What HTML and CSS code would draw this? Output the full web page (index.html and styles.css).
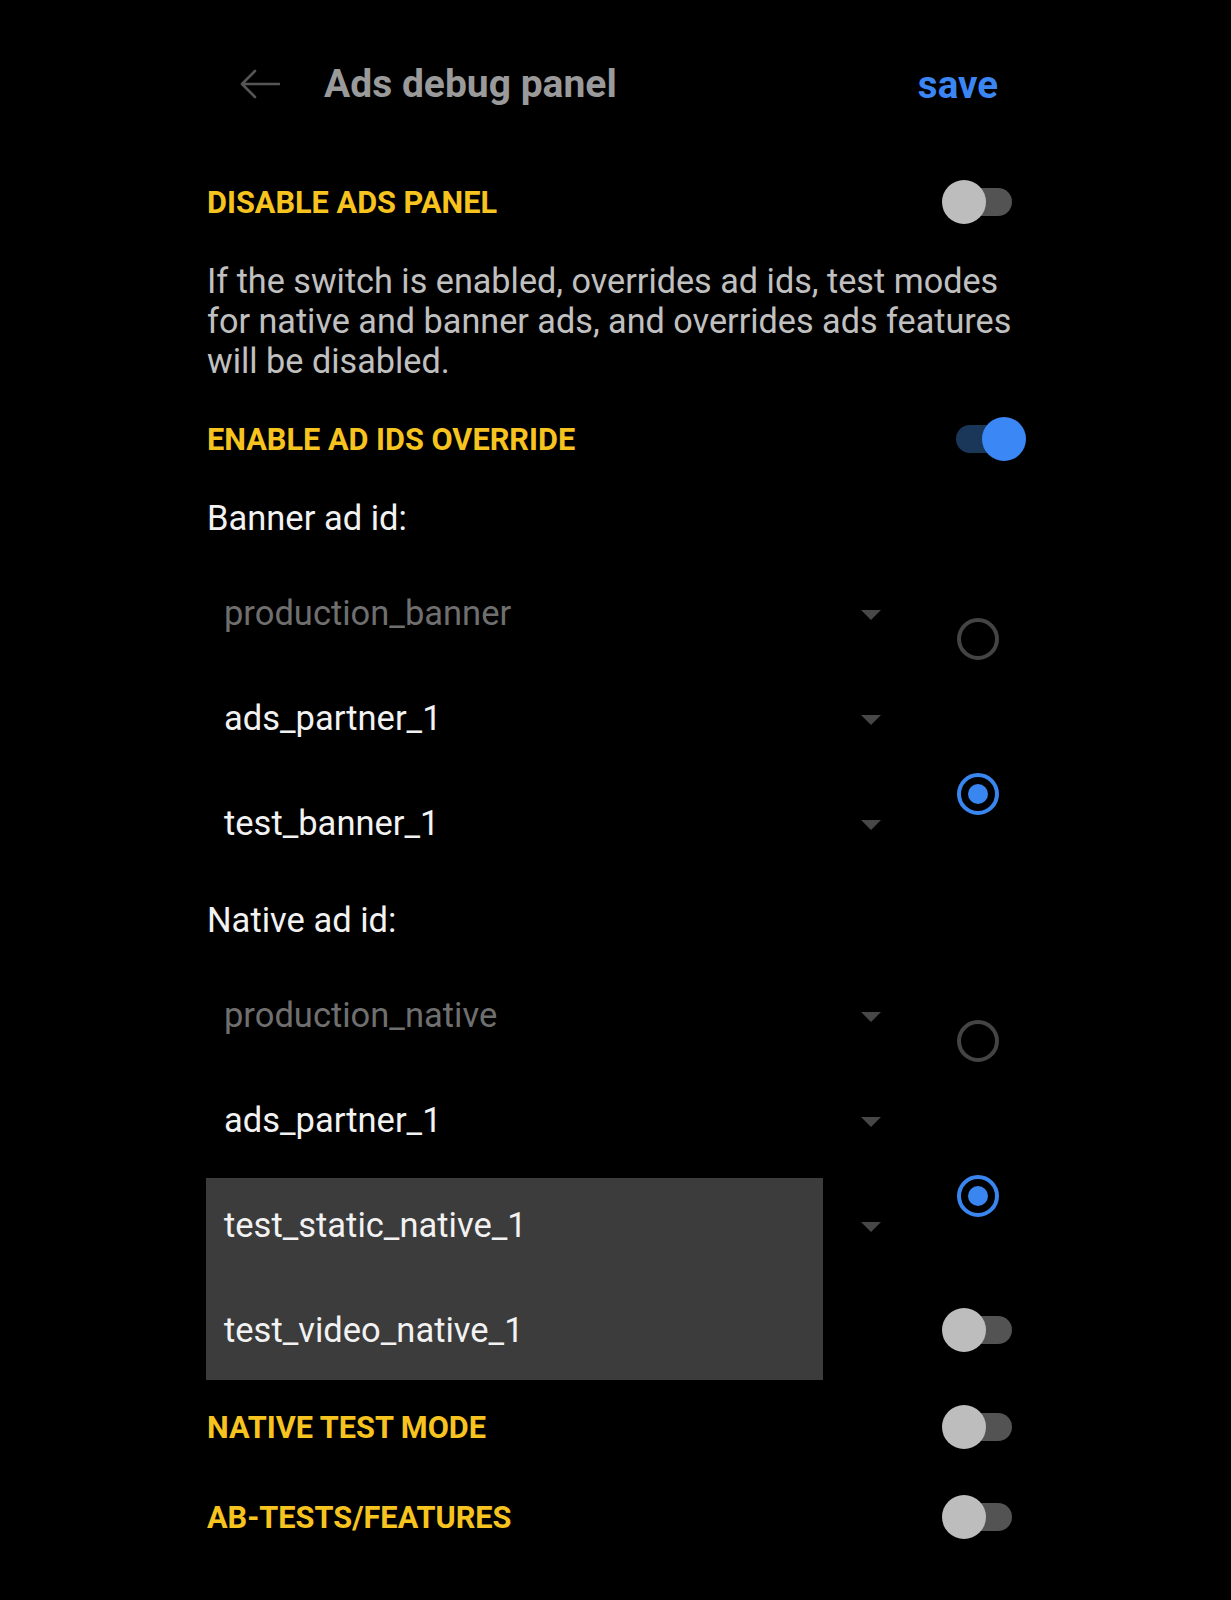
FILE: index.html
```html
<!DOCTYPE html>
<html lang="en">
<head>
    <meta charset="UTF-8">
    <meta name="viewport" content="width=device-width, initial-scale=1.0">
    <title>Ads debug panel</title>
    <link rel="stylesheet" href="styles.css">
</head>
<body>
    <div class="screen">
        <header class="topbar">
            <span class="back">
                <svg width="40" height="30" viewBox="0 0 40 30">
                    <path d="M39 15 H3 M15 2 L2 15 L15 28" fill="none" stroke="#555" stroke-width="2.6" stroke-linecap="round" stroke-linejoin="round"/>
                </svg>
            </span>
            <h1 class="title">Ads debug panel</h1>
            <span class="save">save</span>
        </header>

        <div class="switch-row row-disable">
            <span class="section-title">DISABLE ADS PANEL</span>
            <span class="switch"><span class="track"></span><span class="knob"></span></span>
        </div>

        <p class="hint">If the switch is enabled, overrides ad ids, test modes for native and banner ads, and overrides ads features will be disabled.</p>

        <div class="switch-row row-override">
            <span class="section-title">ENABLE AD IDS OVERRIDE</span>
            <span class="switch on"><span class="track"></span><span class="knob"></span></span>
        </div>

        <div class="field-label">Banner ad id:</div>
        <div class="id-group">
            <div class="spinners">
                <div class="spinner disabled"><span>production_banner</span><i class="caret"></i></div>
                <div class="spinner"><span>ads_partner_1</span><i class="caret"></i></div>
                <div class="spinner"><span>test_banner_1</span><i class="caret"></i></div>
            </div>
            <div class="radios">
                <span class="radio"></span>
                <span class="radio checked"></span>
            </div>
        </div>

        <div class="field-label native-label">Native ad id:</div>
        <div class="id-group">
            <div class="spinners">
                <div class="spinner disabled"><span>production_native</span><i class="caret"></i></div>
                <div class="spinner"><span>ads_partner_1</span><i class="caret"></i></div>
                <div class="spinner"><span></span><i class="caret"></i></div>
            </div>
            <div class="radios">
                <span class="radio"></span>
                <span class="radio checked"></span>
            </div>

            <!-- открытый выпадающий список -->
            <ul class="popup">
                <li>test_static_native_1</li>
                <li>test_video_native_1</li>
            </ul>
        </div>

        <!-- подпись этой строки закрыта списком -->
        <div class="switch-row row-banner-test">
            <span class="section-title"></span>
            <span class="switch"><span class="track"></span><span class="knob"></span></span>
        </div>

        <div class="switch-row row-native-test">
            <span class="section-title">NATIVE TEST MODE</span>
            <span class="switch"><span class="track"></span><span class="knob"></span></span>
        </div>

        <div class="switch-row row-ab">
            <span class="section-title">AB-TESTS/FEATURES</span>
            <span class="switch"><span class="track"></span><span class="knob"></span></span>
        </div>
    </div>
</body>
</html>
```

FILE: styles.css
```css
body {
    margin: 0;
    background: #000;
    font-family: Roboto, "Noto Sans", sans-serif;
    color: #f2f2f2;
}

.screen {
    width: 819px;
    margin-left: 207px;
    padding-bottom: 49px;
}

/* верхняя панель */
.topbar {
    height: 168px;
    display: flex;
    align-items: center;
    padding-right: 28px;
}

.back {
    display: flex;
    margin-left: 33px;
    width: 40px;
}

.title {
    margin: 0 0 0 44px;
    font-size: 39px;
    font-weight: bold;
    color: #9a9a9a;
    flex: 1;
}

.save {
    font-size: 38.5px;
    font-weight: bold;
    color: #3b86f2;
}

/* строки с переключателями */
.switch-row {
    height: 68px;
    display: flex;
    align-items: center;
    justify-content: space-between;
}

.section-title {
    font-size: 30.7px;
    font-weight: bold;
    color: #f7c41f;
}

.switch {
    position: relative;
    width: 84px;
    height: 44px;
}

.switch .track {
    position: absolute;
    left: 14px;
    top: 8px;
    width: 56px;
    height: 28px;
    border-radius: 14px;
    background: #535353;
}

.switch .knob {
    position: absolute;
    left: 0;
    top: 0;
    width: 44px;
    height: 44px;
    border-radius: 50%;
    background: #bdbdbd;
}

.switch.on .track {
    background: #1a3658;
}

.switch.on .knob {
    left: 40px;
    background: #3b87f5;
}

.hint {
    margin: 25px 0 0;
    font-size: 34.2px;
    line-height: 40px;
    color: #c0c0c0;
}

.row-override {
    margin-top: 24px;
}

.field-label {
    margin-top: 25px;
    font-size: 34.5px;
    line-height: 40px;
    color: #f2f2f2;
}

.native-label {
    margin-top: 20px;
}

/* группа выбора id */
.id-group {
    position: relative;
    margin-top: 27px;
    display: grid;
    grid-template-columns: 688px 44px;
    column-gap: 62px;
}

.spinner {
    height: 105px;
    display: flex;
    align-items: center;
    justify-content: space-between;
    padding: 0 14px 0 17px;
    font-size: 34.5px;
    color: #f2f2f2;
}

.spinner span {
    margin-bottom: 10px;
}

.spinner.disabled {
    color: #6f6f6f;
}

.caret {
    width: 0;
    height: 0;
    border-left: 10px solid transparent;
    border-right: 10px solid transparent;
    border-top: 10px solid #474747;
    margin-top: -6px;
}

.radios {
    padding-top: 53px;
    display: flex;
    flex-direction: column;
    gap: 113px;
}

.radio {
    box-sizing: border-box;
    width: 42px;
    height: 42px;
    border-radius: 50%;
    border: 4px solid #444;
    display: flex;
    align-items: center;
    justify-content: center;
}

.radio.checked {
    border-color: #3a86f0;
}

.radio.checked::after {
    content: "";
    width: 20px;
    height: 20px;
    border-radius: 50%;
    background: #3a86f0;
}

.popup {
    position: absolute;
    left: -1px;
    top: 211px;
    width: 617px;
    margin: 0;
    padding: 0;
    list-style: none;
    background: #3c3c3c;
    z-index: 2;
}

.popup li {
    box-sizing: border-box;
    height: 101px;
    display: flex;
    align-items: center;
    padding-left: 18px;
    font-size: 34.5px;
    color: #f2f2f2;
}

.popup li:first-child {
    padding-bottom: 8px;
}

.row-banner-test {
    margin-top: 14px;
}

.row-native-test {
    margin-top: 29px;
}

.row-ab {
    margin-top: 22px;
}
```
